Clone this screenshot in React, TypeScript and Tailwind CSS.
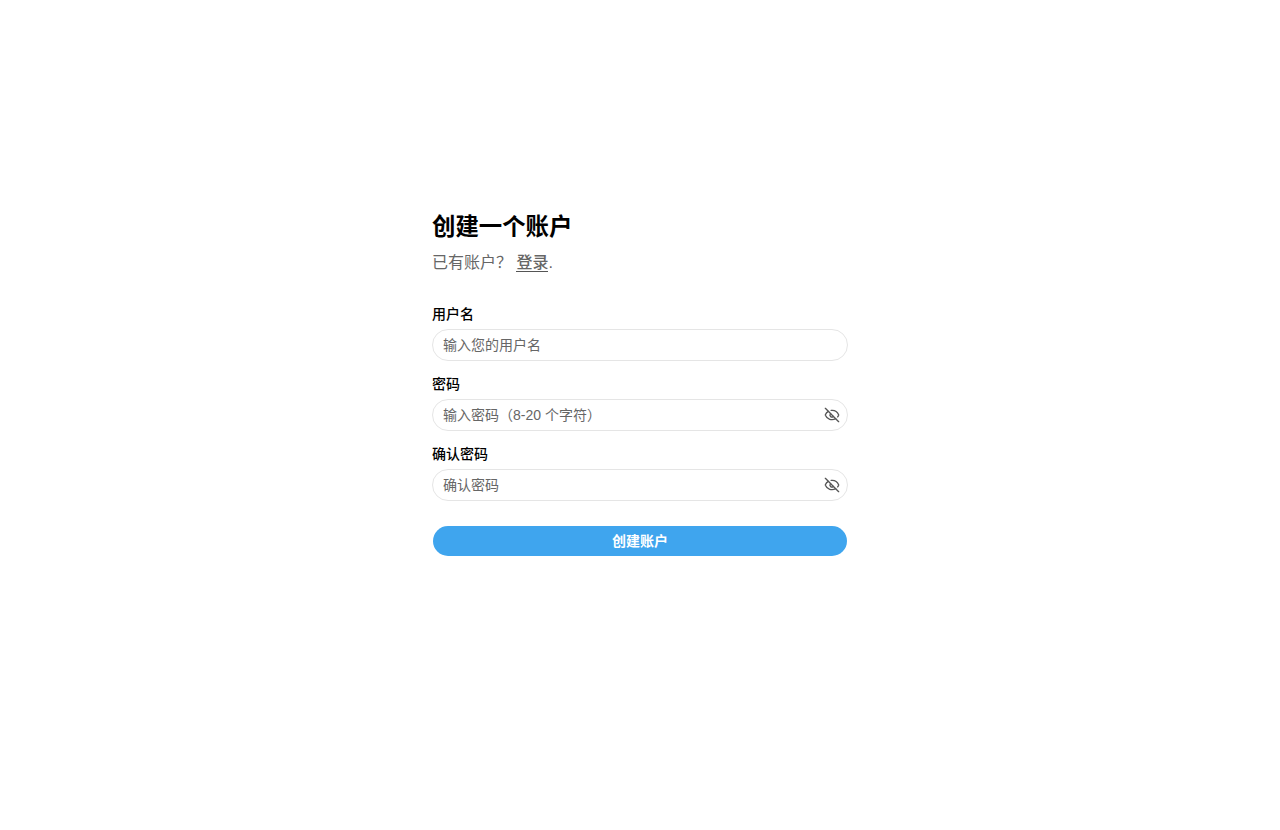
import React from 'react';
import { EyeOff } from 'lucide-react';

const inputClass = 'block h-8 w-full rounded-full border border-[#e5e5e5] bg-white px-[10px] text-sm text-[#333] outline-none placeholder:text-[#666]';

const Field: React.FC<{ label: string; placeholder: string; type?: string; toggle?: boolean }> = ({ label, placeholder, type = 'text', toggle }) => (
    <div className="mb-4">
        <label className="mb-[7px] block text-sm leading-[15px] font-medium text-black">{label}</label>
        <div className="relative">
            <input type={type} placeholder={placeholder} className={inputClass} />
            {toggle && (
                <button type="button" className="absolute top-2 right-2 text-[#555]" aria-label="toggle password">
                    <EyeOff size={16} />
                </button>
            )}
        </div>
    </div>
);

export default function App() {
    return (
        <div className="min-h-[830px] bg-white pt-[212px] font-['Liberation_Sans','Noto_Sans_CJK_SC',sans-serif]">
            <div className="mx-auto w-[416px]">
                <h1 className="text-[23.4px] leading-[30px] font-bold text-black">创建一个账户</h1>
                <p className="mt-[9px] mb-[32px] text-base leading-6 text-[#666]">
                    已有账户？ <a href="#" className="border-b border-[#555] font-medium text-[#666]">登录</a>.
                </p>
                <form>
                    <Field label="用户名" placeholder="输入您的用户名" />
                    <Field label="密码" placeholder="输入密码（8-20 个字符）" type="password" toggle />
                    <Field label="确认密码" placeholder="确认密码" type="password" toggle />
                    <button type="button" className="mt-[9px] ml-px h-[30px] w-[414px] rounded-full bg-[#3fa5ee] text-sm font-bold text-white">创建账户</button>
                </form>
            </div>
        </div>
    );
}
